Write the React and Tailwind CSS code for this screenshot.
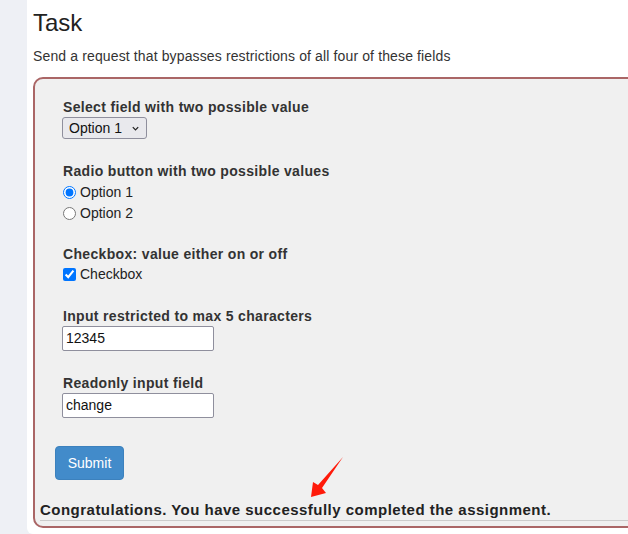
import React from 'react';

const Label = ({ children }) => (
  <div className="text-[14px] leading-[20px] font-bold text-[#333] tracking-[0.33px]">{children}</div>
);

const TextInput = ({ value }) => (
  <div className="ml-[-1px] w-[152px] h-[25px] border border-[#8f8f9d] rounded-[2px] bg-white px-[3px] text-[14px] leading-[23px] text-[#111]">
    {value}
  </div>
);

const App = () => {
  return (
    <div className="relative flex h-[534px] w-[628px] overflow-hidden bg-[#eef0f5] font-['Liberation_Sans',Arial,sans-serif] text-[#333]">
      <div className="w-[27px] shrink-0" />
      <div className="flex-1 bg-white rounded-bl-[6px] pl-[6px] pt-[8px]">
        <h2 className="text-[24px] leading-[30px] font-normal text-[#222]">Task</h2>
        <p className="mt-[8px] text-[14px] leading-[20px] text-[#333] tracking-[0.13px]">
          Send a request that bypasses restrictions of all four of these fields
        </p>

        {/* Form box */}
        <div className="mt-[11px] w-[640px] h-[451px] border-2 border-[#aa6666] rounded-[10px] bg-[#f0f0f0] pt-[18px]">
          <div className="pl-[28px] flex flex-col">
            <Label>Select field with two possible value</Label>
            <div className="ml-[-1px] flex items-center w-[85px] h-[22px] border border-[#8f8f9d] rounded-[3px] bg-[#e9e9ed] pl-[6px] pr-[6px] text-[14px] text-[#111]">
              <span>Option 1</span>
              <svg className="ml-auto" width="9" height="9" viewBox="0 0 10 10" fill="none">
                <path d="M2 3.5 L5 6.5 L8 3.5" stroke="#222" strokeWidth="1.4" />
              </svg>
            </div>

            <div className="mt-[22px]">
              <Label>Radio button with two possible values</Label>
            </div>
            <div className="mt-[1px] flex flex-col">
              <label className="flex items-center gap-[4px] h-[21px] text-[14px] text-[#222]">
                <input type="radio" name="r" defaultChecked className="m-0 w-[13px] h-[13px] accent-[#0075ff]" />
                Option 1
              </label>
              <label className="flex items-center gap-[4px] h-[21px] text-[14px] text-[#222]">
                <input type="radio" name="r" className="m-0 w-[13px] h-[13px] accent-[#0075ff]" />
                Option 2
              </label>
            </div>

            <div className="mt-[20px]">
              <Label>Checkbox: value either on or off</Label>
            </div>
            <label className="flex items-center gap-[4px] h-[21px] text-[14px] text-[#222]">
              <input type="checkbox" defaultChecked className="m-0 w-[13px] h-[13px] accent-[#0075ff]" />
              Checkbox
            </label>

            <div className="mt-[21px]">
              <Label>Input restricted to max 5 characters</Label>
            </div>
            <TextInput value="12345" />

            <div className="mt-[22px]">
              <Label>Readonly input field</Label>
            </div>
            <TextInput value="change" />
          </div>

          <div className="pl-[20px] mt-[28px]">
            <button className="w-[69px] h-[34px] rounded-[4px] bg-[#428bca] border border-[#3c81bd] text-white text-[14px]">
              Submit
            </button>
          </div>

          <div className="pl-[5px] mt-[20px]">
            <div className="text-[15px] leading-[20px] font-bold text-[#222] tracking-[0.48px]">
              Congratulations. You have successfully completed the assignment.
            </div>
            <div className="h-px bg-[#cccccc]" />
          </div>
        </div>
      </div>

      {/* red annotation arrow */}
      <svg className="absolute left-0 top-0 pointer-events-none" width="628" height="534">
        <polygon points="343,457 322,488 326,493 311,497 313,482 318,485" fill="#ff1a0a" />
      </svg>
    </div>
  );
};

export default App;
